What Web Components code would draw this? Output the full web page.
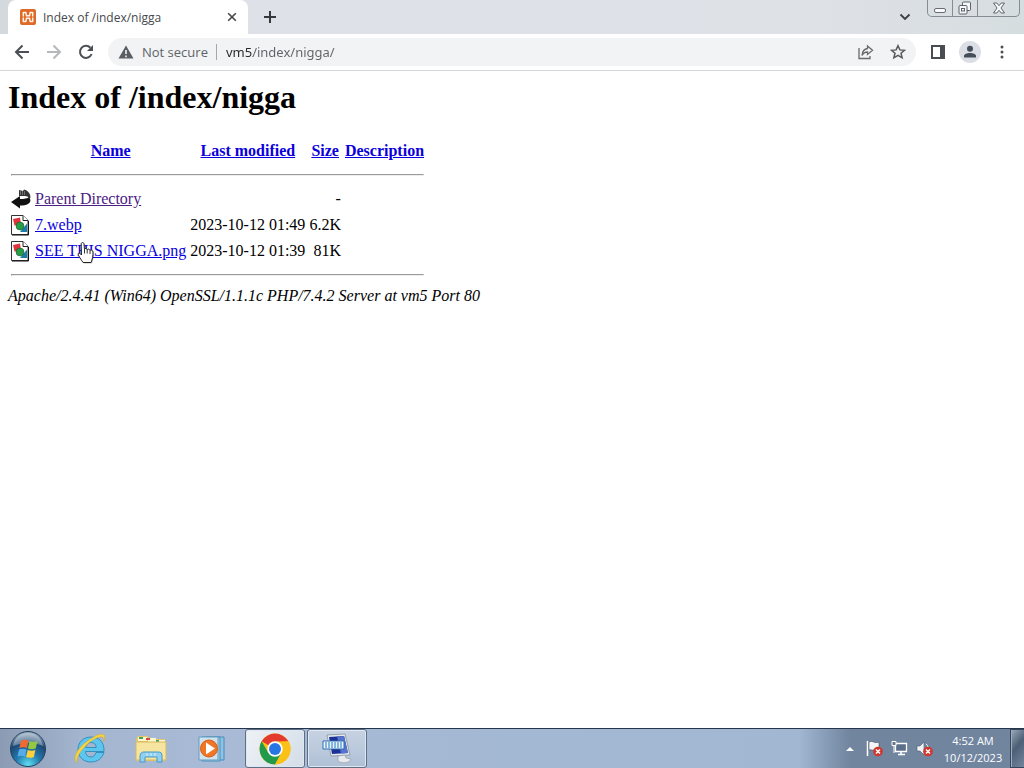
<!DOCTYPE html>
<html lang="en">
<head>
<meta charset="utf-8">
<title>Index of /index/nigga</title>
<style>
html,body{height:100%;margin:0}
body{background:#fff}
</style>
</head>
<body>
<desk-top></desk-top>
<script>
const define=(name,markup)=>{
  const t=document.createElement('template');
  t.innerHTML=markup;
  customElements.define(name,class extends HTMLElement{
    constructor(){super();this.attachShadow({mode:'open'}).append(t.content.cloneNode(true));}
  });
};

define('tab-strip',`
<style>
:host{display:flex;height:34px;background:linear-gradient(90deg,#d3d9dc,#dee1e8 25%,#dee1e6 80%,#d6dddf);font:12px "Open Sans","Noto Sans",sans-serif;color:#45494d}
*{box-sizing:border-box}
.tab{display:flex;align-items:center;width:240px;margin-left:8px;padding:0 8px 0 12px;background:#fff;border-radius:8px 8px 0 0}
.tab span{flex:1;margin-left:7px;white-space:nowrap}
button{border:0;background:none;padding:0;display:grid;place-items:center;width:16px;height:34px}
.new{width:28px;margin-left:8px}
.more{margin-left:auto;width:20px}
.win{display:flex;height:17px;margin:0 4px 0 12px;border:1px solid #858c94;border-top:0;border-radius:0 0 5px 5px}
.win button{height:16px;width:25px;border-right:1px solid #858c94}
.win button:last-child{width:41px;border:0}
svg{display:block}
</style>
<div class="tab">
<svg width="16" height="16" viewBox="0 0 16 16"><rect width="16" height="16" rx="2" fill="#df6a28"/><g fill="none" stroke="#fff3e8" stroke-width="1.500" stroke-linejoin="round"><path d="M3.300 7.500V3.600h2.600l.6 3.200h3l.6-3.200h2.600v3.900M3.300 8.500v3.900h2.600l.6-3.200h3l.6 3.200h2.600V8.500"/></g></svg>
<span>Index of /index/nigga</span>
<button aria-label="Close tab"><svg width="10" height="10" viewBox="0 0 10 10"><path d="M1.200 1.200l7.600 7.600M8.800 1.200L1.200 8.800" stroke="#44474a" stroke-width="1.600"/></svg></button>
</div>
<button class="new" aria-label="New tab"><svg width="14" height="14" viewBox="0 0 14 14"><path d="M7 1v12M1 7h12" stroke="#36393c" stroke-width="2"/></svg></button>
<button class="more" aria-label="Search tabs"><svg width="12" height="8" viewBox="0 0 12 8"><path d="M1.500 1.500L6 6l4.500-4.500" fill="none" stroke="#3c4043" stroke-width="1.800"/></svg></button>
<div class="win">
<button aria-label="Minimize"><svg width="14" height="14" viewBox="0 0 14 14"><rect x="1.500" y="7.500" width="11" height="4" rx="1.500" fill="#fafafa" stroke="#676d76"/></svg></button>
<button aria-label="Restore"><svg width="14" height="14" viewBox="0 0 14 14"><g fill="#f6f7f8" stroke="#5d636c"><rect x="4.500" y="1" width="8" height="8.500" rx="1"/><rect x="1" y="4.500" width="8" height="8.500" rx="1"/><rect x="3.500" y="7.500" width="3" height="2.500"/></g></svg></button>
<button aria-label="Close"><svg width="14" height="12" viewBox="0 0 14 12"><path d="M1.500 1h3.300L7 3.700 9.200 1h3.300L9 6l3.500 5H9.200L7 8.300 4.800 11H1.500L5 6z" fill="#f6f7f8" stroke="#60666f"/></svg></button>
</div>`);

define('tool-bar',`
<style>
:host{display:flex;align-items:center;height:37px;box-sizing:border-box;padding:0 10px;background:#fff;border-bottom:1px solid #d5d8db;font:13px "Open Sans","Noto Sans",sans-serif;color:#5f6368}
*{box-sizing:border-box}
button{border:0;background:none;padding:0;display:grid;place-items:center;width:24px;height:24px;margin-right:8px;flex:none}
form{flex:1;display:flex;align-items:center;height:28px;margin:0 10px 0 2px;padding:0 6px 0 10px;border-radius:14px;background:#f1f3f4}
label{display:flex;align-items:center;gap:8px;padding-right:8px;border-right:1px solid #a4a8ac;line-height:16px;white-space:nowrap}
input{flex:1;min-width:0;border:0;outline:0;padding:0 0 0 9px;height:20px;font:13px "Noto Sans","Open Sans",sans-serif;color:#5f6368;-webkit-text-fill-color:transparent;background:linear-gradient(90deg,#25282b 36px,#5f6368 36px);-webkit-background-clip:text;background-clip:text}
form button:last-child{margin:0}
button.menu{margin:0}
button.side,button.me{margin-right:8px}
svg{display:block}
</style>
<button aria-label="Back"><svg width="16" height="16" viewBox="0 0 16 16"><path d="M15 8H2M8.500 1.500L2 8l6.500 6.500" fill="none" stroke="#4c5054" stroke-width="2"/></svg></button>
<button aria-label="Forward"><svg width="16" height="16" viewBox="0 0 16 16"><path d="M1 8h13M7.500 1.500L14 8l-6.500 6.500" fill="none" stroke="#b6b9bc" stroke-width="2"/></svg></button>
<button aria-label="Reload"><svg width="16" height="16" viewBox="0 0 16 16"><path d="M13.600 10A6 6 0 1 1 12.400 3.800" fill="none" stroke="#4c5054" stroke-width="2"/><path d="M15 1v6H9z" fill="#4c5054"/></svg></button>
<form>
<label for="url"><svg width="16" height="14" viewBox="0 0 16 14"><path d="M8 0.500L15.500 13.500H.5z" fill="#5a5e62"/><path d="M8 5v4M8 10.500v1.700" stroke="#f1f3f4" stroke-width="1.600"/></svg>Not secure</label>
<input id="url" value="vm5/index/nigga/" spellcheck="false">
<button type="button" aria-label="Share"><svg width="18" height="16" viewBox="0 0 18 16"><g fill="none" stroke="#666a6e" stroke-width="1.300"><path d="M2 4v10.500h11V12"/><path d="M10.500 2l5 4.200-5 4.200V8C8 8 6.300 9 5 11.500 5.300 7.500 7 5 10.500 4.500z"/></g></svg></button>
<button type="button" aria-label="Bookmark"><svg width="16" height="16" viewBox="0 0 16 16"><path d="M8 1.700l1.900 4.200 4.600.4-3.500 3 1.100 4.500L8 11.400l-4.100 2.400L5 9.300l-3.500-3 4.600-.4z" fill="none" stroke="#55595d" stroke-width="1.500"/></svg></button>
</form>
<button class="side" aria-label="Side panel"><svg width="16" height="14" viewBox="0 0 16 14"><path d="M2 1h12v12H2z" fill="none" stroke="#494d51" stroke-width="2"/><path d="M10 1h4v12h-4z" fill="#494d51"/></svg></button>
<button class="me" aria-label="Profile"><svg width="22" height="22" viewBox="0 0 22 22"><circle cx="11" cy="11" r="11" fill="#dbdfe5"/><circle cx="11" cy="7.800" r="3" fill="#454d58"/><path d="M5 16.500v-1.500c0-2 3-3 6-3s6 1 6 3v1.500z" fill="#454d58"/></svg></button>
<button class="menu" aria-label="Menu"><svg width="4" height="14" viewBox="0 0 4 14"><g fill="#4c5054"><circle cx="2" cy="2" r="1.500"/><circle cx="2" cy="7" r="1.500"/><circle cx="2" cy="12" r="1.500"/></g></svg></button>`);

define('file-icon',`
<style>:host{display:block;width:20px;height:22px}svg{display:block}:host([kind=back]) .img,:host(:not([kind=back])) .back{display:none}</style>
<svg class="img" width="20" height="22" viewBox="0 0 20 22"><path d="M.5 1.500h11.500l5 5v14H.5z" fill="#fff" stroke="#333"/><path d="M17.500 7v14H1" fill="none" stroke="#111"/><path d="M12 1.500v5h5" fill="#fff" stroke="#222"/><path d="M2 5l7-1.500 1 7-6.500 1z" fill="#e0343c"/><path d="M9 18h7V9.500z" fill="#187da8"/><circle cx="9" cy="12" r="4" fill="#289b47" stroke="#124e25" stroke-width=".5"/></svg>
<svg class="back" width="20" height="22" viewBox="0 0 20 22"><path d="M0 14l9-6v3c4 0 8-.5 9-2 2 3 2 5-1 7-2 1.200-5 1.500-8 1.500V20.500z" fill="#111"/><path d="M8 2l4 1 1-1.500c4 1 6.500 4 6.500 8L18 11c0-2-2-3-4-3H8z" fill="#333"/><path d="M9 4h5M9 6h6" stroke="#aaa" stroke-dasharray="1 1"/></svg>`);

define('file-listing',`
<style>
:host{display:block;padding:8px;font:16px "Liberation Serif",serif;color:#000}
h1{font-size:32px;line-height:37px;margin:0 0 21px}
table{border-spacing:2px;border-collapse:separate}
th,td{padding:1px;line-height:18px;white-space:nowrap}
hr{margin:8px 0}
a{color:#0a00dc}
a.seen{color:#4b2183}
.r{text-align:right}
address{margin-top:0;line-height:18px}
.hold{position:relative}
.hand{position:absolute;left:43px;top:2px}
</style>
<h1>Index of /index/nigga</h1>
<table>
<thead>
<tr><th><file-icon style="visibility:hidden"></file-icon></th><th><a href="#name">Name</a></th><th><a href="#date">Last modified</a></th><th><a href="#size">Size</a></th><th><a href="#desc">Description</a></th></tr>
</thead>
<tbody>
<tr><td colspan="5"><hr></td></tr>
<tr><td><file-icon kind="back"></file-icon></td><td><a class="seen" href="#parent">Parent Directory</a></td><td></td><td class="r">-</td><td></td></tr>
<tr><td><file-icon></file-icon></td><td><a href="#webp">7.webp</a></td><td class="r">2023-10-12 01:49</td><td class="r">6.2K</td><td></td></tr>
<tr><td><file-icon></file-icon></td><td class="hold"><a href="#png">SEE THIS NIGGA.png</a><svg class="hand" width="18" height="24" viewBox="0 0 18 24"><path d="M6 21.500C4 18.500 1.500 15 1 13c.5-1.500 2-1 3.500 1L4.200 3c0-2 2.600-2 2.800 0l.5 5.500c.5-1.500 2.500-1.300 2.700.3.700-1.200 2.600-.8 2.800.7 1-.9 2.900-.3 3 1.500.1 4-.5 7-2 10.500z" transform="translate(1 1)" fill="#555" opacity=".35"/><path d="M6 21.500C4 18.500 1.500 15 1 13c.5-1.500 2-1 3.500 1L4.200 3c0-2 2.600-2 2.800 0l.5 5.500c.5-1.500 2.500-1.300 2.700.3.700-1.200 2.600-.8 2.800.7 1-.9 2.900-.3 3 1.500.1 4-.5 7-2 10.500z" fill="#fff" stroke="#222"/><path d="M7.500 8.500v4M10.200 9v3.500M13 9.500V13" stroke="#333"/></svg></td><td class="r">2023-10-12 01:39</td><td class="r">81K</td><td></td></tr>
<tr><td colspan="5"><hr></td></tr>
</tbody>
</table>
<address>Apache/2.4.41 (Win64) OpenSSL/1.1.1c PHP/7.4.2 Server at vm5 Port 80</address>`);

define('task-button',`
<style>
:host{display:block;width:60px;height:40px}
button{box-sizing:border-box;width:100%;height:100%;padding:0;border:0;background:none;display:grid;place-items:center}
:host([open]) button{border:1px solid #5e6f85;border-radius:3px;background:linear-gradient(#c7d3e2,#afc0d6);box-shadow:inset 0 0 0 1px #dfe7f0}
:host([active]) button{background:linear-gradient(120deg,#eef2f6,#d3dde8)}
</style>
<button><slot></slot></button>`);

define('task-bar',`
<style>
:host{display:flex;height:40px;box-sizing:border-box;border-top:1px solid #25364c;background:linear-gradient(90deg,#8b9bb3,#a4b5d0 8%,#a9bad6 20%,#a3b8d3 50%,#a1b7d2 78%,#71859f 83%,#71859f);font:11px "Open Sans","Noto Sans",sans-serif;color:#fff}
*{box-sizing:border-box}
nav{display:flex;flex:1;gap:1px}
.start{width:59px;padding-right:4px}
.pair{display:flex;gap:2px;margin-left:2px}
task-button{height:39px}
svg{display:block}
.tray{display:flex;align-items:center;gap:8px;padding-right:10px}
.tray button{border:0;padding:0;background:none}
time{text-align:center;line-height:17px;width:60px;margin-right:7px;padding-top:3px;white-space:nowrap}
.show{width:14px;height:39px;border:1px solid #33465c;border-right:0;border-radius:0;padding:0;background:linear-gradient(130deg,#9aa8b9,#4d5f76 45%,#73859d);box-shadow:inset 1px 0 #9fadbd}
</style>
<nav>
<task-button class="start"><svg width="38" height="38" viewBox="0 0 38 38"><defs><radialGradient id="o" cx=".5" cy=".95" r=".9"><stop offset="0" stop-color="#5fe0f2"/><stop offset=".4" stop-color="#2379ad"/><stop offset=".75" stop-color="#1d4772"/><stop offset="1" stop-color="#8fa6bc"/></radialGradient></defs><circle cx="19" cy="19" r="17.500" fill="url(#o)" stroke="#27425f"/><path d="M4 16C6 6 13 3 19 3s13 3 15 13c-8-4-20-4-30 0z" fill="#fff" opacity=".35"/><path d="M12 11c3-2 5-1.500 7.500-.3l-1.700 7.300c-2.500-1-5-1-7.500 0z" fill="#ee6a30"/><path d="M20.500 11.200c3 1 5 .8 8-.2l-1.800 7.500c-3 1-5 1-7.800 0z" fill="#93c841"/><path d="M10 19.500c2.500-1 5-1 7.500 0L16 26.500c-2.500-1.200-5-1-7.500 0z" fill="#55aceb"/><path d="M18.700 20c3 1 5 1 7.700 0l-1.600 7c-3 1.200-5 1-7.700 0z" fill="#fdd13b"/></svg></task-button>
<task-button><svg width="34" height="34" viewBox="0 0 34 34"><path d="M31 20.500c-2 6-6.500 9.500-13 9.500-7.500 0-13-5-13-12.500S10.500 5 18 5c8 0 13.500 5 13 14.500H12.500c0 3.500 2.500 5.500 5.500 5.500 2.500 0 4-1.500 5-4.500zM12.800 15.500h10.400c-.2-3.400-2.200-5-5.100-5s-4.800 1.600-5.300 5z" fill="#5cc6ee" fill-rule="evenodd" stroke="#2583b5" stroke-width=".8"/><path d="M4 31c-5-4 0-14 8.500-20.500S28 .5 31 3c1.300 1.300.7 4.500-.5 6.500.5-2.500.5-3.500-.5-4.200C27.500 3.500 20 7 14 12.500S2.500 26 4 31z" fill="#f8d443" stroke="#d8a91e" stroke-width=".5"/></svg></task-button>
<task-button><svg width="34" height="32" viewBox="0 0 34 32"><path d="M2 6l2-3h10l2 3h15v22H2z" fill="#e5c866"/><path d="M4 4h9v4H4zM14 5h8v4h-8zM22 7h9v3h-9z" fill="#fff7d0"/><path d="M5 4h4v2H5zM22 7h3v2h-3z" fill="#49a45b"/><path d="M12 5h4v2h-4z" fill="#d34a42"/><path d="M2 9h30v18H2z" fill="#f5e5a0" stroke="#d7b963"/><path d="M6 29v-6c0-3 2-4 4-4h14c3 0 4 1 4 4v6h-5v-5H11v5z" fill="#8fd0ef" stroke="#4b98c8"/><path d="M13 20v3M17 20v3M21 20v3" stroke="#d9f2ff"/></svg></task-button>
<task-button><svg width="30" height="30" viewBox="0 0 30 30"><path d="M9 3h18v23H9z" fill="#8fc2e3" stroke="#478db9"/><path d="M5 3h18v24H5z" fill="#a5d0ec" stroke="#478db9"/><path d="M2 3h19v23H2z" fill="#d0e2ee" stroke="#659dbf"/><circle cx="12" cy="14.500" r="8.500" fill="#ee7625" stroke="#d85c18"/><path d="M9 8.500v12l9-6z" fill="#fff"/></svg></task-button>
<div class="pair">
<task-button open active><svg width="32" height="32" viewBox="0 0 32 32"><circle cx="16" cy="16" r="15.500" fill="#fbc116"/><path d="M16 16L2.600 8.300A15.500 15.500 0 0 1 29.400 8.300L16 9z" fill="#e33b2e"/><path d="M2.600 8.300A15.500 15.500 0 0 0 16 31.500L22.500 20 16 16 9.500 20z" fill="#229a4b"/><path d="M16 8.500h13.700A15.500 15.500 0 0 1 16 31.500l6.500-11.700z" fill="#fbc116"/><circle cx="16" cy="16" r="7.700" fill="#fff"/><circle cx="16" cy="16" r="6" fill="#2676e5"/></svg></task-button>
<task-button open><svg width="34" height="32" viewBox="0 0 34 32"><path d="M7 2l18-1 5 21-19 1z" fill="#e5e9ed" stroke="#7d8996" stroke-width=".7"/><path d="M9 4l15-1 4 17-16 1z" fill="#1b3198"/><path d="M17 3.500l7-.5 4 17-7 .5z" fill="#5674cf"/><path d="M18 23l7-1 1 3 5 1c-1 4-9 5-13 2z" fill="#e7eaed" stroke="#8b96a1" stroke-width=".6"/><path d="M3 8h21v8H3z" fill="#eaf4fb" stroke="#2d6eae"/><path d="M5 10h17M5 12h17M5 14h17" stroke="#1d78c1" stroke-dasharray="2 1"/></svg></task-button>
</div>
</nav>
<div class="tray">
<button aria-label="Show hidden icons"><svg width="16" height="8" viewBox="0 0 16 8"><path d="M4 6l4-4 4 4z" fill="#fff"/></svg></button>
<button aria-label="Action Center"><svg width="17" height="17" viewBox="0 0 17 17"><path d="M1.500 1v15" stroke="#fff" stroke-width="1.500"/><path d="M3 2c4-2 5 2 10 0v8c-4 2-6-1-10 0z" fill="#f3f5f7" stroke="#415166" stroke-width=".6"/><circle cx="12" cy="11.500" r="4.800" fill="#d3352c"/><path d="M10 9.500l4 4m0-4l-4 4" stroke="#fff" stroke-width="1.500"/></svg></button>
<button aria-label="Network"><svg width="17" height="17" viewBox="0 0 17 17"><path d="M4.500 3.500h11v8h-11z" fill="#5b6f8a" stroke="#fff" stroke-width="1.300"/><path d="M7 14.500h7M10 12v2" stroke="#fff" stroke-width="1.500"/><path d="M1 1.500h4v4H1zM3 5.500V13" fill="#64758c" stroke="#fff"/></svg></button>
<button aria-label="Volume"><svg width="17" height="17" viewBox="0 0 17 17"><path d="M1 6h3l4-4v13l-4-4H1z" fill="#f1f4f7" stroke="#4b5b70" stroke-width=".6"/><path d="M10 4c1.500 1 2 2 2 4" fill="none" stroke="#fff"/><circle cx="12" cy="11.500" r="4.800" fill="#d3352c"/><path d="M10 9.500l4 4m0-4l-4 4" stroke="#fff" stroke-width="1.500"/></svg></button>
</div>
<time datetime="2023-10-12T04:52">4:52 AM<br>10/12/2023</time>
<button class="show" aria-label="Show desktop"></button>`);

define('desk-top',`
<style>
:host{display:flex;flex-direction:column;min-height:100vh;background:#fff}
main{flex:1}
</style>
<tab-strip></tab-strip><tool-bar></tool-bar>
<main><file-listing></file-listing></main>
<task-bar></task-bar>`);
</script>
</body>
</html>
